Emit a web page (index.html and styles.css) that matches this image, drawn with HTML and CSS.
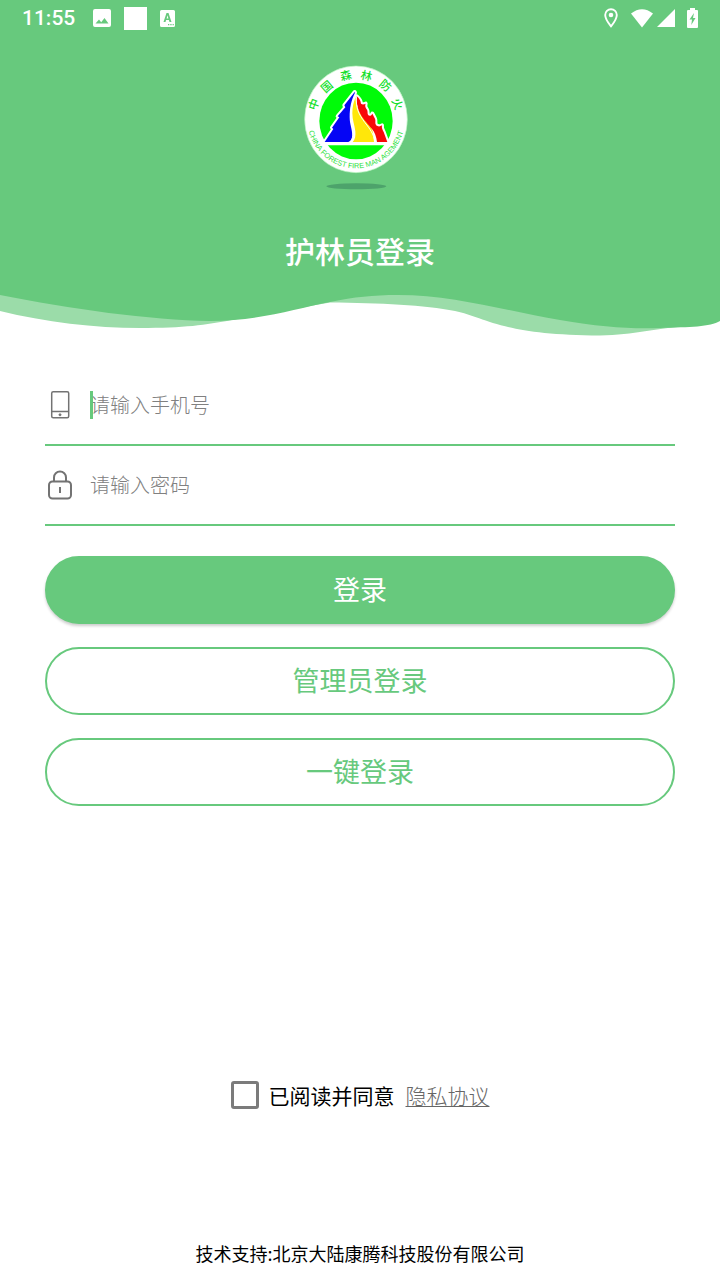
FILE: index.html
```html
<!DOCTYPE html>
<html lang="zh-CN">
<head>
<meta charset="utf-8">
<meta name="viewport" content="width=device-width, initial-scale=1">
<title>护林员登录</title>
<link rel="stylesheet" href="styles.css">
</head>
<body>
<div class="screen">
  <header class="hero">
    <div class="status">
      <time class="clock">11:55</time>
      <div class="notices">
        <svg width="18" height="18" viewBox="0 0 18 18"><path fill="#fff" fill-rule="evenodd" d="M2 0h14a2 2 0 0 1 2 2v14a2 2 0 0 1-2 2H2a2 2 0 0 1-2-2V2a2 2 0 0 1 2-2zM2.500 14.500h13L11.500 9l-3.300 4.200L6 10.500z"/></svg>
        <svg width="23" height="23" viewBox="0 0 23 23"><rect width="23" height="23" fill="#fff"/></svg>
        <svg width="15" height="17" viewBox="0 0 15 17"><path fill="#fff" fill-rule="evenodd" d="M1.500 0h12A1.500 1.500 0 0 1 15 1.500v14a1.500 1.500 0 0 1-1.500 1.500h-12A1.500 1.500 0 0 1 0 15.500v-14A1.500 1.500 0 0 1 1.500 0zM6.500 3 3.500 12h2l.6-2h2.800l.6 2h2L8.500 3zM6.600 8.400 7.500 5.300l.9 3.100zM8 14v1.300h1.300V14zm2.300 0v1.300h1.300V14zm2.300 0v1.300h1.200V14z"/></svg>
      </div>
      <div class="signals">
        <svg width="14" height="20" viewBox="0 0 14 20"><path d="M7 1.200A5.800 5.800 0 0 0 1.200 7C1.200 11.300 7 18.300 7 18.300S12.800 11.300 12.800 7A5.800 5.800 0 0 0 7 1.200z" fill="none" stroke="#fff" stroke-width="1.900"/><circle cx="7" cy="7" r="2.300" fill="#fff"/></svg>
        <svg class="wifi" width="22" height="19" viewBox="0 0 22 19"><path fill="#fff" d="M0 4.500Q11-4 22 4.500L11 18.500z"/></svg>
        <svg class="cell" width="18" height="18" viewBox="0 0 18 18"><path fill="#fff" d="M18 0v18H0z"/></svg>
        <svg width="11" height="20" viewBox="0 0 11 20"><path fill="#fff" fill-rule="evenodd" d="M3 0h5v2h2a1 1 0 0 1 1 1v16a1 1 0 0 1-1 1H1a1 1 0 0 1-1-1V3a1 1 0 0 1 1-1h2zM7 5 2.500 11.500H5L4.300 17l4.200-7H6z"/></svg>
      </div>
    </div>
    <svg class="logo" width="128" height="135" viewBox="0 0 384 405" role="img" aria-label="中国森林防火">
      <ellipse cx="181" cy="379" rx="90" ry="9" fill="#4da36b"/>
      <ellipse cx="180" cy="178" rx="154" ry="160" fill="#fff" stroke="#b5f5bd" stroke-width="2"/>
      <ellipse cx="180" cy="183" rx="110" ry="115" fill="#00fb08"/>
      <path fill="#fff" d="M72 246h213v10H72z"/>
      <g stroke="#fff" stroke-width="12" stroke-linejoin="round">
        <path id="tree" d="M176 96 145 136l3 6-23 27 5 3-22 31 4 4-26 39h71q12-4 12-18c0-20-8-34-8-56 0-30 5-52 16-74z"/>
        <path id="slope" d="M179 111c0 24 6 36 18 52 16 22 30 36 34 56l3 27h-64c8-8 9-19 8-32-2-18-9-34-9-54 0-20 4-34 10-49z"/>
        <path id="flame" d="M182 109c6 5 12 11 13 22 5 4 9 2 14 0-3 6-1 12 4 18 3 4 0 11 4 17 5 3 10 0 12-5 4 6 5 10 8 15 3 6-1 12 3 19 6 6 12 5 18 1-2 8 2 14 5 20l11 30h-31c-2-18-7-29-15-39-22-27-48-48-46-98z"/>
      </g>
      <g stroke-width="0">
        <path fill="#ffe70a" d="M179 111c0 24 6 36 18 52 16 22 30 36 34 56l3 27h-64c8-8 9-19 8-32-2-18-9-34-9-54 0-20 4-34 10-49z"/>
        <path fill="#0505f5" d="M176 96 145 136l3 6-23 27 5 3-22 31 4 4-26 39h71q12-4 12-18c0-20-8-34-8-56 0-30 5-52 16-74z"/>
        <path fill="#f80808" d="M182 109c6 5 12 11 13 22 5 4 9 2 14 0-3 6-1 12 4 18 3 4 0 11 4 17 5 3 10 0 12-5 4 6 5 10 8 15 3 6-1 12 3 19 6 6 12 5 18 1-2 8 2 14 5 20l11 30h-31c-2-18-7-29-15-39-22-27-48-48-46-98z"/>
      </g>
      <path fill="none" stroke="#fff" stroke-width="3" d="M181 110c-2 34 7 53 26 78 15 19 26 34 30 58M179 105c-17 34-17 56-11 88 6 27 3 43-6 53"/>
      <g class="seal" text-anchor="middle">
        <text transform="translate(54 133) rotate(-70)" y="12">中</text>
        <text transform="translate(93 80) rotate(-41)" y="12">国</text>
        <text transform="translate(150 47) rotate(-13)" y="12">森</text>
        <text transform="translate(211 48) rotate(13)" y="12">林</text>
        <text transform="translate(268 77) rotate(40)" y="12">防</text>
        <text transform="translate(304 132) rotate(68)" y="12">火</text>
      </g>
      <path id="arc" fill="none" d="M34 178A146 147 0 0 0 326 178"/>
      <text class="seal-en" text-anchor="middle"><textPath href="#arc" startOffset="50%">CHINA FOREST FIRE MAN AGEMENT</textPath></text>
    </svg>
    <h1 class="title">护林员登录</h1>
    <svg class="wave" viewBox="0 0 720 60" preserveAspectRatio="none" aria-hidden="true">
      <path fill="#fff" d="M0 15V60H720V15z"/>
      <path fill="#9bdca9" d="M0 0V31C45 42 95 48 140 48S205 45 232 40L330 22.500C380 23 425 25 455 31S500 55 600 55.500C635 55 655 48 690 46V0z"/>
      <path fill="#67c97d" d="M0 0V15C70 29 150 40 210 41 258 41 295 29 330 22 355 17 372 15 398 15 455 15 510 32 560 40 600 47 630 49 660 48S710 47 720 41V0z"/>
    </svg>
  </header>
  <main class="content">
    <form class="login">
      <div class="field">
        <label class="icon" for="phone" aria-label="手机号">
          <svg width="30" height="30" viewBox="0 0 30 30" fill="none" stroke="#737373" stroke-width="1.500"><rect x="6.700" y="1.700" width="17" height="26" rx="1.500"/><path d="M7 21.500h16.500"/><circle cx="15" cy="24.800" r="1" fill="#737373" stroke-width="1"/></svg>
        </label>
        <div class="entry">
          <input id="phone" type="tel" placeholder="请输入手机号">
          <span class="caret"></span>
        </div>
      </div>
      <div class="field">
        <label class="icon" for="password" aria-label="密码">
          <svg width="30" height="30" viewBox="0 0 30 30" fill="none" stroke="#737373" stroke-width="2"><rect x="4" y="11.500" width="22" height="17" rx="3.500"/><path d="M9 11V7.500a6 6 0 0 1 12 0V11M15 17v6"/></svg>
        </label>
        <div class="entry"><input id="password" type="password" placeholder="请输入密码"></div>
      </div>
      <div class="actions">
        <button class="btn primary" type="submit">登录</button>
        <button class="btn" type="button">管理员登录</button>
        <button class="btn" type="button">一键登录</button>
      </div>
    </form>
    <div class="agree">
      <input id="agree" type="checkbox">
      <label for="agree">已阅读并同意</label>
      <a href="#privacy">隐私协议</a>
    </div>
  </main>
  <footer class="support">技术支持:北京大陆康腾科技股份有限公司</footer>
</div>
</body>
</html>
```
FILE: styles.css
```css
* { box-sizing: border-box; }
body {
  margin: 0;
  background: #fff;
  color: #000;
  font-family: "Noto Sans CJK SC", sans-serif;
}
svg { display: block; }
.screen {
  display: flex;
  flex-direction: column;
  min-height: 100vh;
}
.hero {
  display: flex;
  flex-direction: column;
  align-items: center;
  background: #67c97d;
}
.status {
  display: flex;
  align-items: center;
  align-self: stretch;
  height: 36px;
  padding: 0 22px;
  color: #fff;
}
.clock {
  font: 500 21px/36px Roboto, sans-serif;
}
.notices {
  display: flex;
  align-items: center;
  gap: 13px;
  margin-left: 18px;
}
.signals {
  display: flex;
  align-items: center;
  margin-left: auto;
}
.wifi { margin-left: 13px; }
.cell { margin: 0 12px 0 4px; }
.logo { margin-top: 24px; }
.seal {
  fill: #12e02a;
  font: 500 34px "Noto Sans CJK SC", sans-serif;
}
.seal-en {
  fill: #2edf40;
  font: 22px "Liberation Sans", sans-serif;
}
.title {
  margin: 33px 0 0;
  color: #fff;
  font-size: 30px;
  font-weight: 500;
  line-height: 44px;
}
.wave {
  width: 100%;
  height: 60px;
  margin-top: 8px;
}
.content {
  display: flex;
  flex: 1;
  flex-direction: column;
  justify-content: space-between;
  padding: 26px 45px 0;
}
.field {
  display: flex;
  align-items: center;
  height: 80px;
  border-bottom: 2px solid #67c97d;
}
.entry {
  position: relative;
  display: flex;
  flex: 1;
  margin-left: 15px;
}
.entry input {
  width: 100%;
  height: 48px;
  padding: 0 0 2px;
  border: 0;
  outline: 0;
  background: none;
  color: #333;
  font: 300 20px/30px "Noto Sans CJK SC", sans-serif;
}
.entry input::placeholder { color: #808080; opacity: 1; }
.caret {
  position: absolute;
  top: 10px;
  left: 0;
  width: 3px;
  height: 28px;
  background: #67c97d;
}
.actions {
  display: flex;
  flex-direction: column;
  gap: 23px;
  margin-top: 30px;
}
.btn {
  height: 68px;
  padding: 0 0 2px;
  border: 2px solid #67c97d;
  border-radius: 34px;
  background: #fff;
  color: #67c97d;
  font: 400 27px/40px "Noto Sans CJK SC", sans-serif;
}
.primary {
  background: #67c97d;
  color: #fff;
  box-shadow: 0 2px 3px rgba(0, 0, 0, 0.2);
}
.agree {
  display: flex;
  align-items: center;
  justify-content: center;
  font-size: 21px;
  line-height: 30px;
}
.agree input {
  appearance: none;
  width: 28px;
  height: 28px;
  margin: 0 10px 0 0;
  border: 3px solid #7b7b7b;
  border-radius: 3px;
}
.agree input:checked { background: #67c97d; }
.agree a {
  margin-left: 11px;
  color: #666;
  font-weight: 300;
  text-decoration: underline;
  text-decoration-thickness: 1px;
  text-underline-offset: 2px;
}
.support {
  margin-top: 130px;
  padding-bottom: 14px;
  font-size: 18px;
  line-height: 26px;
  text-align: center;
}
```
